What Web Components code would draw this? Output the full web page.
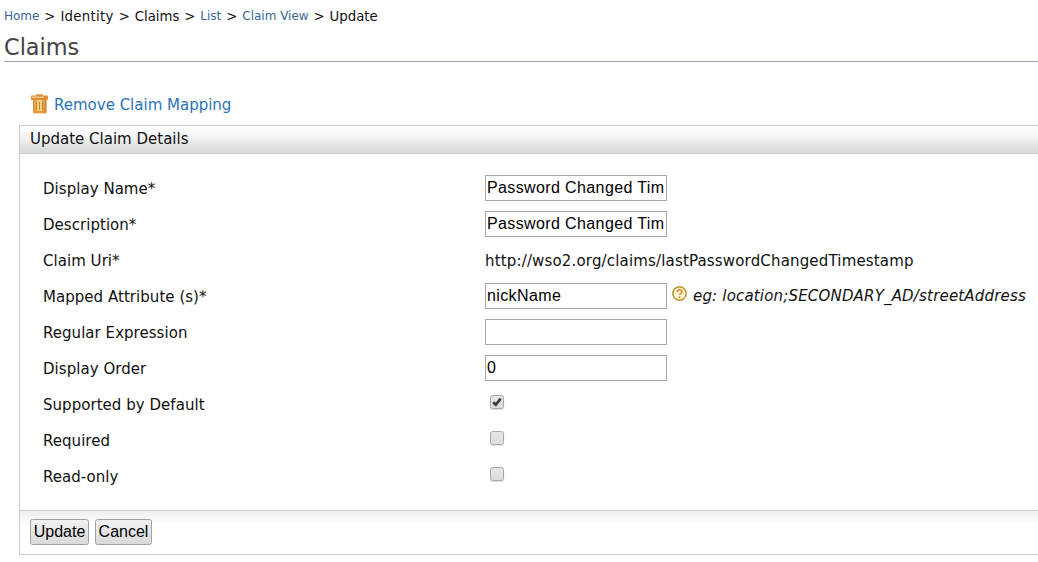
<!DOCTYPE html>
<html lang="en">
<head>
<meta charset="utf-8">
<title>Claims</title>
<style>
html,body{margin:0;background:#fff;overflow:hidden}
body{font:15px/18px "DejaVu Sans",sans-serif;color:#111;width:1038px;height:562px}
</style>
</head>
<body>
<claims-page>
  <bread-crumbs slot="crumbs">
    <crumb-link>Home</crumb-link><span>&gt;</span><span style="letter-spacing:.3px">Identity</span><span>&gt;</span><span>Claims</span><span>&gt;</span><crumb-link>List</crumb-link><span>&gt;</span><crumb-link>Claim View</crumb-link><span>&gt;</span><span>Update</span>
  </bread-crumbs>
  <page-title slot="title">Claims</page-title>
  <remove-link>Remove Claim Mapping</remove-link>
  <claim-panel>
    <span slot="head">Update Claim Details</span>
    <field-row label="Display Name*"><text-field value="Password Changed Timestamp"></text-field></field-row>
    <field-row label="Description*"><text-field value="Password Changed Timestamp"></text-field></field-row>
    <field-row label="Claim Uri*"><span style="letter-spacing:.165px;padding-top:2px">http://wso2.org/claims/lastPasswordChangedTimestamp</span></field-row>
    <field-row label="Mapped Attribute (s)*"><text-field value="nickName"></text-field><help-hint>eg: location;SECONDARY_AD/streetAddress</help-hint></field-row>
    <field-row label="Regular Expression"><text-field value=""></text-field></field-row>
    <field-row label="Display Order"><text-field value="0"></text-field></field-row>
    <field-row label="Supported by Default"><check-box checked></check-box></field-row>
    <field-row label="Required"><check-box></check-box></field-row>
    <field-row label="Read-only"><check-box></check-box></field-row>
    <push-button slot="foot" style="--w:59px">Update</push-button>
    <push-button slot="foot" style="--w:57px">Cancel</push-button>
  </claim-panel>
</claims-page>
<script>
function define(name, html, setup) {
  customElements.define(name, class extends HTMLElement {
    constructor() {
      super();
      this.attachShadow({mode: "open"}).innerHTML = html;
    }
    connectedCallback() { if (setup) setup(this, this.shadowRoot); }
  });
}

define("claims-page", `<style>
:host{display:block}
main{padding:30px 0 0 19px}
</style><slot name="crumbs"></slot><slot name="title"></slot><main><slot></slot></main>`);

define("bread-crumbs", `<style>
:host{display:flex;align-items:baseline;gap:4.9px;padding:8px 0 0 4px;height:24px;box-sizing:content-box;font-size:13.3px;line-height:18px;white-space:nowrap}
</style><slot></slot>`);

define("crumb-link", `<style>
:host{display:block;margin-bottom:1px;transform:translateY(-1px)}
a{color:#386698;font-size:12px;text-decoration:none}
</style><a><slot></slot></a>`);

define("page-title", `<style>
:host{display:block;margin-left:4px;height:29px;border-bottom:1px solid #a0a0be}
h2{margin:0;font-weight:400;font-size:22.4px;line-height:30px;color:#444}
</style><h2><slot></slot></h2>`);

define("remove-link", `<style>
:host{display:flex;align-items:center;height:24px;line-height:24px;margin:0 0 9px 12px;color:#2a73b8}
svg{margin-right:6px;flex:none}
span{padding-top:2px}
</style><svg width="17" height="20" viewBox="0 0 17 20">
<defs><linearGradient id="g"><stop offset="0" stop-color="#d98a35"/><stop offset=".5" stop-color="#ffe095"/><stop offset="1" stop-color="#c97318"/></linearGradient></defs>
<rect x="5" y="0" width="7" height="2" fill="#e9a45c"/>
<rect x="0" y="1.500" width="17" height="4.500" rx="1" fill="#e08a38"/><rect x="1" y="2.500" width="12" height="1.500" fill="#f7c890"/>
<path d="M2 6h13.500v12q0 1.500-1.500 1.500H3.500Q2 19.500 2 18z" fill="url(#g)"/>
<path d="M5.500 7.500v9M8.500 7.500v9M11.500 7.500v9" stroke="#c98830" stroke-width="1"/>
<path d="M2.500 18h12.500" stroke="#e5983e" stroke-width="2"/></svg><span><slot></slot></span>`);

define("claim-panel", `<style>
:host{display:block;border:1px solid #ccc;border-right:0;height:428px}
header{height:27px;padding:0 10px;border-bottom:1px solid #ccc;background:linear-gradient(#fff,#f5f6f6 35%,#d6d9d9);line-height:27px}
section{height:340px;padding:16px 0 0 23px}
footer{display:flex;gap:6px;height:35px;padding:8px 0 0 10px;border-top:1px solid #ccc;background:linear-gradient(#eee,#fff 14px)}
</style><header><slot name="head"></slot></header><section><slot></slot></section><footer><slot name="foot"></slot></footer>`);

define("field-row", `<style>
:host{display:grid;grid-template-columns:442px 1fr;height:36px;line-height:38px;white-space:nowrap}
label{letter-spacing:.04px}
div{display:flex;align-items:center;height:36px}
</style><label></label><div><slot></slot></div>`,
(el, root) => root.querySelector("label").textContent = el.getAttribute("label"));

define("text-field", `<style>
:host{display:flex}
input{box-sizing:border-box;width:182px;height:26px;margin:0;padding:0 2px 0 1px;border:1px solid #a9a9a9;border-radius:0;background:#fff;color:#000;font:16px "Liberation Sans",sans-serif;letter-spacing:.38px;outline:0}
</style><input type="text">`,
(el, root) => root.querySelector("input").value = el.getAttribute("value"));

define("help-hint", `<style>
:host{display:flex;align-items:center;height:36px;font-style:italic;letter-spacing:.18px}
svg{margin:0 5px 4px;flex:none}
</style><svg width="16" height="16" viewBox="0 0 16 16" fill="none"><circle cx="7.500" cy="7.500" r="6.700" fill="#fff6d6" stroke="#bd932f" stroke-width="1.500"/><path d="M5.300 6q.2-2.300 2.300-2.300T9.900 5.700Q9.900 7 8.500 7.700q-.9.500-.9 1.400M7.600 10.300v1.700" stroke="#e98522" stroke-width="1.600"/></svg><slot></slot>`);

define("check-box", `<style>
:host{display:block;box-sizing:border-box;width:14px;height:14px;margin:0 0 4px 5px;border:1px solid #a8a8a8;border-radius:2.500px;background:linear-gradient(#e6e6e6,#dcdcdc);box-shadow:0 1px 1px #ddd}
svg{display:none}
:host([checked]) svg{display:block}
</style><svg width="12" height="12" viewBox="0 0 12 12"><path d="M2.200 6.300l2.600 2.500L9.600 2.600" fill="none" stroke="#3b3b3b" stroke-width="2.600"/></svg>`);

define("push-button", `<style>
:host{display:block}
button{box-sizing:border-box;width:var(--w);height:26px;margin:0;padding:0;border:1px solid #a0a0a0;border-radius:2.500px;background:linear-gradient(#f1f1f1,#e8e8e8 40%,#d9d9d9);color:#000;font:16px "Liberation Sans",sans-serif;white-space:nowrap}
</style><button><slot></slot></button>`);
</script>
</body>
</html>
